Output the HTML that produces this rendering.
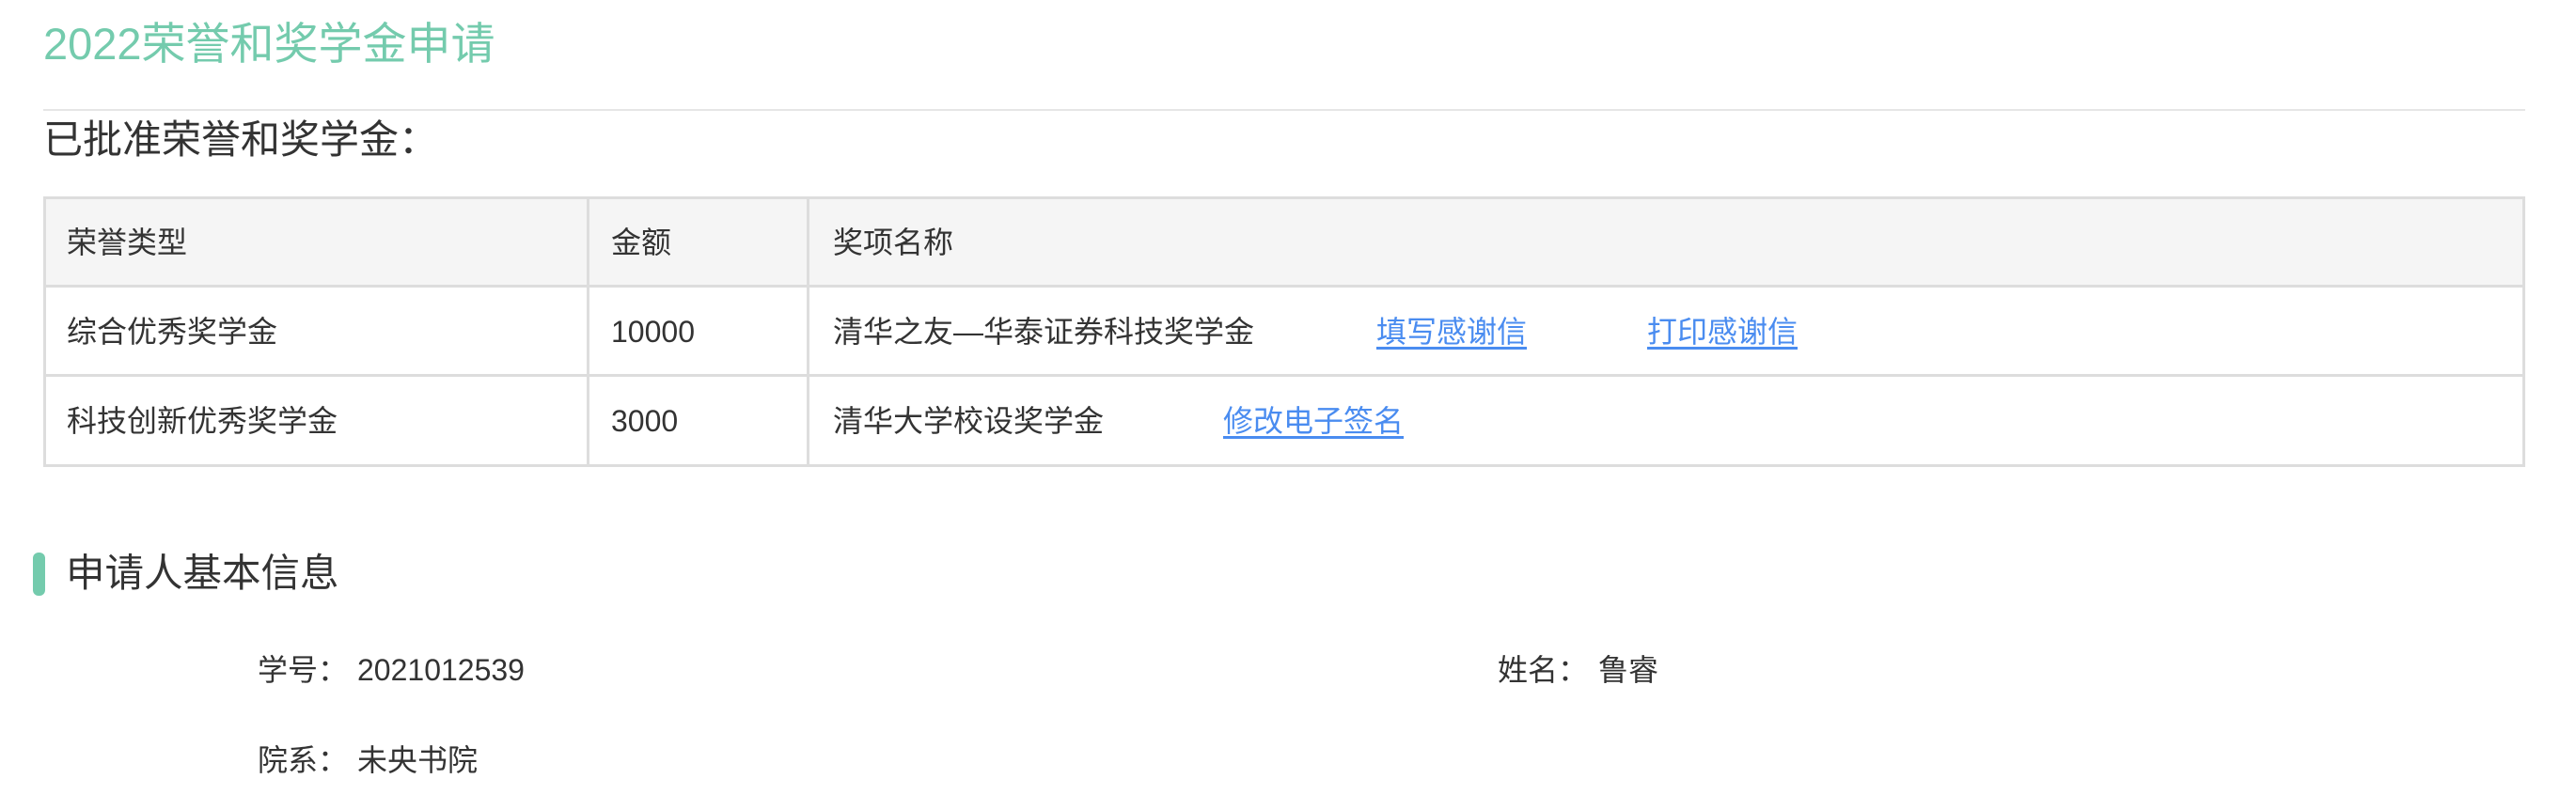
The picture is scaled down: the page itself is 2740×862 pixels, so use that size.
<!DOCTYPE html>
<html><head><meta charset="utf-8"><style>
*{margin:0;padding:0;box-sizing:border-box}
body{width:2740px;height:862px;background:#fff;position:relative;overflow:hidden;font-family:"Liberation Sans","Noto Sans CJK SC",sans-serif;color:#333}
.a{position:absolute;white-space:nowrap}
.t{font-size:32px;line-height:32px}
a{color:#4a8cf0;text-decoration:underline;text-underline-offset:5px}
.hl{position:absolute;background:#ddd}
</style></head><body>
<div class="a" style="left:46px;top:23px;font-size:47px;line-height:48px;color:#74cbad">2022荣誉和奖学金申请</div>
<div class="hl" style="left:46px;top:116px;width:2640px;height:2px;background:#e6e6e6"></div>
<div class="a" style="left:46px;top:126px;font-size:42px;line-height:46px;color:#333">已批准荣誉和奖学金：</div>

<div style="position:absolute;left:46px;top:209px;width:2640px;height:94px;background:#f5f5f5"></div>
<div class="hl" style="left:46px;top:209px;width:2640px;height:3px"></div>
<div class="hl" style="left:46px;top:303px;width:2640px;height:3px"></div>
<div class="hl" style="left:46px;top:398px;width:2640px;height:3px"></div>
<div class="hl" style="left:46px;top:494px;width:2640px;height:3px"></div>
<div class="hl" style="left:46px;top:209px;width:3px;height:288px"></div>
<div class="hl" style="left:624px;top:209px;width:3px;height:288px"></div>
<div class="hl" style="left:858px;top:209px;width:3px;height:288px"></div>
<div class="hl" style="left:2683px;top:209px;width:3px;height:288px"></div>

<div class="a t" style="left:71px;top:242px">荣誉类型</div>
<div class="a t" style="left:650px;top:242px">金额</div>
<div class="a t" style="left:886px;top:242px">奖项名称</div>

<div class="a t" style="left:71px;top:337px">综合优秀奖学金</div>
<div class="a t" style="left:650px;top:337px">10000</div>
<div class="a t" style="left:886px;top:337px">清华之友—华泰证券科技奖学金</div>
<div class="a t" style="left:1464px;top:337px"><a>填写感谢信</a></div>
<div class="a t" style="left:1752px;top:337px"><a>打印感谢信</a></div>

<div class="a t" style="left:71px;top:432px">科技创新优秀奖学金</div>
<div class="a t" style="left:650px;top:432px">3000</div>
<div class="a t" style="left:886px;top:432px">清华大学校设奖学金</div>
<div class="a t" style="left:1301px;top:432px"><a>修改电子签名</a></div>

<div style="position:absolute;left:35px;top:588px;width:13px;height:46px;border-radius:6px;background:#74cbad"></div>
<div class="a" style="left:70px;top:587px;font-size:41.5px;line-height:46px;color:#333">申请人基本信息</div>

<div class="a t" style="left:274px;top:697px">学号：</div>
<div class="a t" style="left:380px;top:697px">2021012539</div>
<div class="a t" style="left:1593px;top:697px">姓名：</div>
<div class="a t" style="left:1700px;top:697px">鲁睿</div>
<div class="a t" style="left:274px;top:793px">院系：</div>
<div class="a t" style="left:380px;top:793px">未央书院</div>
</body></html>
